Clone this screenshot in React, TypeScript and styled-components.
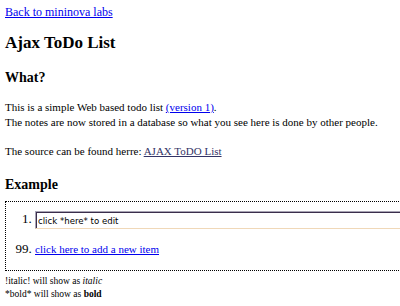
import styled, { createGlobalStyle } from "styled-components";

const GlobalStyle = createGlobalStyle`
  html, body {
    margin: 0;
    overflow: hidden;
    background: #ffffff;
  }
  body {
    padding: 5px;
    font-family: "Liberation Serif", "Times New Roman", serif;
    font-size: 11px;
    line-height: 15px;
    color: #000000;
  }
`;

const Link = styled.a<{ $dark?: boolean; $size?: number }>`
  color: ${(p) => (p.$dark ? "#333366" : "#0000ee")};
  font-size: ${(p) => (p.$size ? `${p.$size}px` : "11px")};
  text-decoration: underline;
`;

const Title = styled.h1`
  font-size: 17px;
  line-height: 22px;
  margin: 12px 0 15px;
`;

const SubTitle = styled.h2<{ $after?: number }>`
  font-size: 14px;
  line-height: 17px;
  margin: 0 0 ${(p) => p.$after ?? 13}px;
`;

const Para = styled.p<{ $after?: number }>`
  margin: 0 0 ${(p) => p.$after ?? 15}px;
`;

const Box = styled.div`
  border: 1px dotted #000000;
  width: calc(100% + 30px);
  padding: 9px 0 13px;
`;

const Items = styled.ol`
  margin: 0;
  padding: 0 0 0 29px;
`;

const Item = styled.li<{ $gap?: number }>`
  margin-top: ${(p) => p.$gap ?? 0}px;
  font-size: 13px;
`;

const EditInput = styled.input`
  box-sizing: border-box;
  width: 100%;
  height: 18px;
  margin: 0;
  padding: 1px 2px 0;
  font-family: "DejaVu Sans", Verdana, sans-serif;
  font-size: 8.6px;
  color: #000000;
  border-style: solid;
  border-width: 1px 0 1px 1px;
  border-color: #a8a4b4 transparent #f0d8b8 #a8a4b4;
  box-shadow: inset 1px 1px 0 #3a2e4c;
  outline: none;
  background: #ffffff;
  vertical-align: middle;
`;

const Note = styled.div`
  font-size: 9.5px;
  line-height: 13px;
  margin-top: 4px;
`;

export default function App() {
  return (
    <>
      <GlobalStyle />
      <Link $size={12} href="#">Back to mininova labs</Link>
      <Title>Ajax ToDo List</Title>
      <SubTitle $after={14}>What?</SubTitle>
      <Para $after={14}>
        This is a simple Web based todo list <Link href="#">(version 1)</Link>.
        <br />
        The notes are now stored in a database so what you see here is done by other people.
      </Para>
      <Para $after={17}>
        The source can be found herre: <Link $dark href="#">AJAX ToDO List</Link>
      </Para>
      <SubTitle $after={8}>Example</SubTitle>
      <Box>
        <Items>
          <Item>
            <EditInput defaultValue="click *here* to edit" />
          </Item>
          <Item value={99} $gap={12}>
            <Link href="#">click here to add a new item</Link>
          </Item>
        </Items>
      </Box>
      <Note>
        !italic! will show as <i>italic</i>
        <br />
        *bold* will show as <b>bold</b>
      </Note>
    </>
  );
}
